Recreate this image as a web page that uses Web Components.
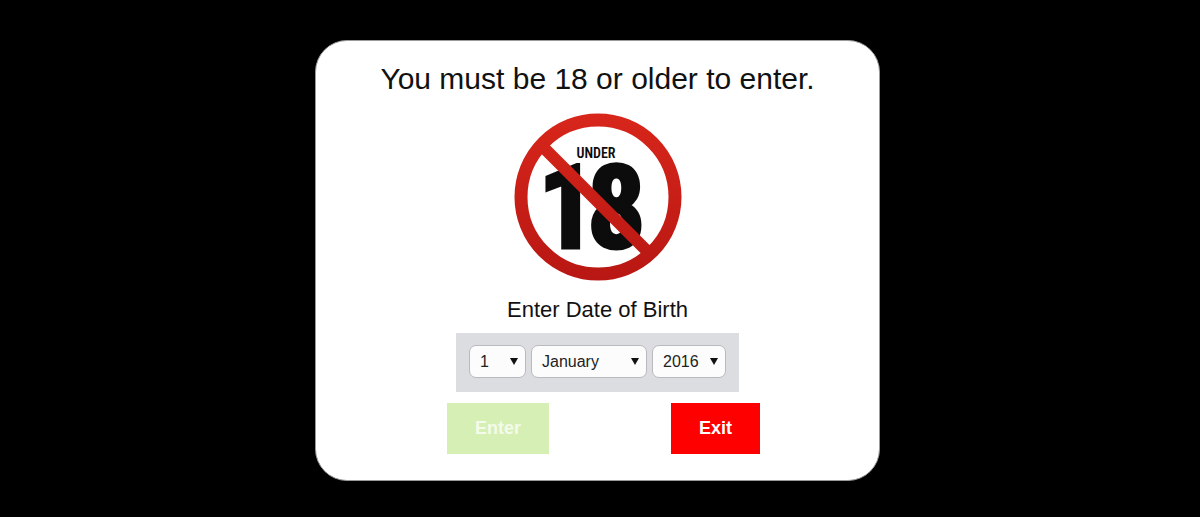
<!DOCTYPE html>
<html lang="en">
<head>
<meta charset="utf-8">
<meta name="viewport" content="width=device-width, initial-scale=1">
<title>Age check</title>
<style>
body { margin: 0; background: #000; color: #111; font-family: "Liberation Sans", Arial, sans-serif; }
</style>
</head>
<body>
<age-gate>
  <span slot="title">You must be 18 or older to enter.</span>
  <under-age-sign></under-age-sign>
  <birth-date></birth-date>
  <gate-actions></gate-actions>
</age-gate>
<script>
class BaseElement extends HTMLElement {
  constructor() {
    super();
    this.attachShadow({ mode: "open" }).innerHTML = this.constructor.markup;
  }
}

customElements.define("age-gate", class extends BaseElement {
  static markup = `
    <style>
      :host { display: flex; justify-content: center; align-items: center; box-sizing: border-box; min-height: 100vh; padding: 40px 5px 36px 0; }
      main { box-sizing: border-box; width: 100%; max-width: 565px; padding: 20px 24px 26px; border: 1px solid #999; border-radius: 32px; background: #fff; display: flex; flex-direction: column; align-items: center; }
      h1 { margin: 0 0 16px; font-size: 30px; line-height: 36px; font-weight: 400; text-align: center; }
    </style>
    <main><h1><slot name="title"></slot></h1><slot></slot></main>`;
});

customElements.define("under-age-sign", class extends BaseElement {
  static markup = `
    <style>
      :host { display: block; width: 168px; height: 168px; }
      svg { display: block; width: 100%; height: 100%; }
      text { font-family: "Roboto Condensed", Roboto, "Liberation Sans", sans-serif; font-weight: 700; fill: #0c0c0c; }
      .word { font-weight: 600; }
      .age { stroke: #0c0c0c; stroke-width: 3; }
    </style>
    <svg viewBox="0 0 168 168" role="img" aria-label="No entry under 18">
      <defs><linearGradient id="red" gradientUnits="userSpaceOnUse" x1="0" y1="0" x2="0" y2="168"><stop offset="0" stop-color="#d8261b"/><stop offset="1" stop-color="#b81713"/></linearGradient></defs>
      <text class="word" x="82" y="45" font-size="14" text-anchor="middle">UNDER</text>
      <text class="age" x="24 73" y="135" font-size="116">18</text>
      <path d="M29 34 139 144" stroke="url(#red)" stroke-width="12"/>
      <circle cx="84" cy="84" r="77" fill="none" stroke="url(#red)" stroke-width="13"/>
    </svg>`;
});

customElements.define("drop-down", class extends HTMLElement {
  constructor() {
    super();
    this.attachShadow({ mode: "open" }).innerHTML = `
    <style>
      :host { display: grid; align-items: center; font-size: 16px; }
      select { grid-area: 1 / 1; appearance: none; box-sizing: border-box; width: 100%; height: 33px; margin: 0; padding: 0 10px; border: 1px solid #b9babd; border-radius: 7px; background: #fcfcfd; color: #222; font: inherit; }
      svg { grid-area: 1 / 1; justify-self: end; margin: 0 8px 0 0; width: 8px; height: 7px; pointer-events: none; }
    </style>
    <select></select>
    <svg viewBox="0 0 8 7" aria-hidden="true"><path d="M0 0h8L4 7z" fill="#111"/></svg>`;
  }
  connectedCallback() {
    const select = this.shadowRoot.querySelector("select");
    select.setAttribute("aria-label", this.getAttribute("label"));
    select.replaceChildren(...this.getAttribute("options").split(",").map(o => new Option(o, o)));
  }
});

const days = Array.from({ length: 31 }, (_, i) => i + 1);
const years = Array.from({ length: 100 }, (_, i) => 2016 - i);

customElements.define("birth-date", class extends BaseElement {
  static markup = `
    <style>
      :host { display: block; margin-top: 16px; }
      fieldset { margin: 0; padding: 0; border: 0; min-width: 0; }
      legend { padding: 0; margin: 0 auto 10px; font-size: 22px; line-height: 26px; }
      div { display: flex; gap: 5px; padding: 12px 13px 14px; background: #dcdde0; }
      .day { width: 57px; }
      .month { width: 116px; }
      .year { width: 74px; }
    </style>
    <fieldset>
      <legend>Enter Date of Birth</legend>
      <div>
        <drop-down class="day" label="Day" options="${days}"></drop-down>
        <drop-down class="month" label="Month" options="January,February,March,April,May,June,July,August,September,October,November,December"></drop-down>
        <drop-down class="year" label="Year" options="${years}"></drop-down>
      </div>
    </fieldset>`;
});

customElements.define("gate-actions", class extends BaseElement {
  static markup = `
    <style>
      :host { display: flex; gap: 122px; margin-top: 11px; padding-left: 12px; }
      button { height: 51px; padding: 0 28px; border: 0; font: 700 18px "Liberation Sans", Arial, sans-serif; color: #fff; background: #f00; cursor: pointer; }
      button:disabled { background: #d6efb4; color: #f4fbea; cursor: default; }
    </style>
    <button type="button" disabled>Enter</button>
    <button type="button">Exit</button>`;
});
</script>
</body>
</html>
